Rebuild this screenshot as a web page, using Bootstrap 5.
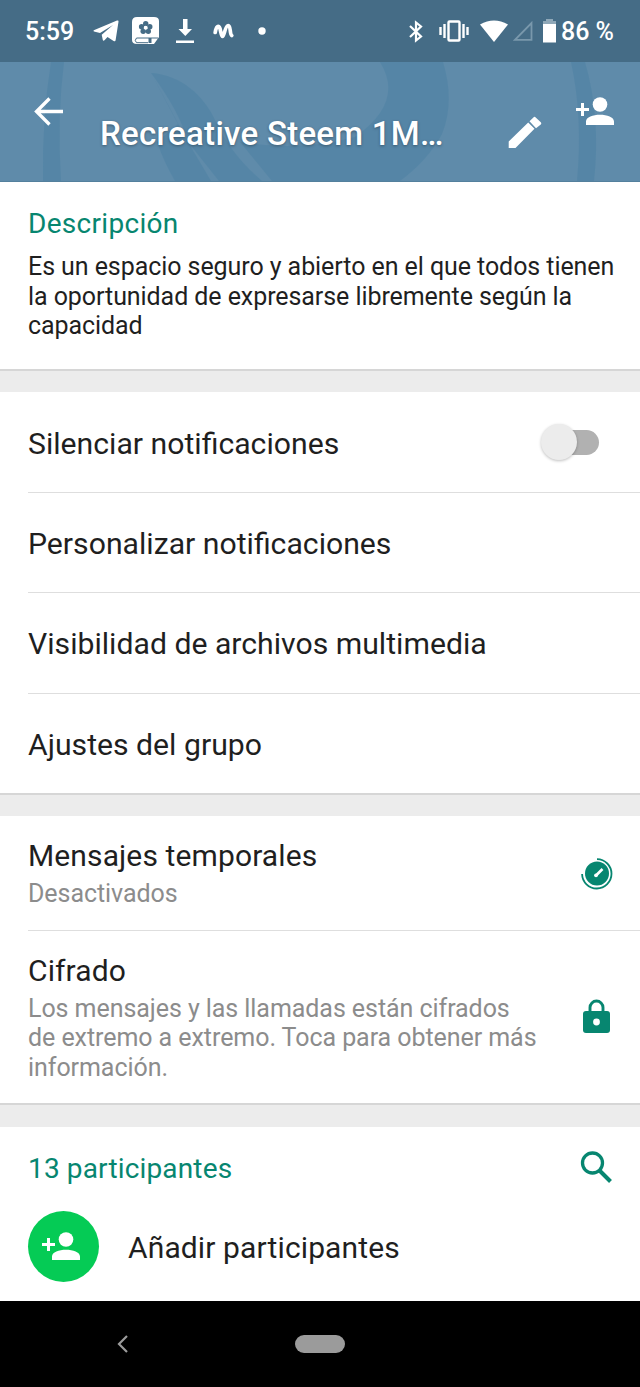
<!DOCTYPE html>
<html lang="es">
<head>
<meta charset="utf-8">
<meta name="viewport" content="width=device-width, initial-scale=1">
<title>Información del grupo</title>
<link href="https://cdn.jsdelivr.net/npm/bootstrap@5.3.0/dist/css/bootstrap.min.css" rel="stylesheet">
<style>
body{font-family:Roboto,"Liberation Sans",sans-serif;background:#ececec;color:#1f1f1f;width:640px;height:1387px;overflow:hidden}
svg{display:block;flex:none}
.statusbar{height:62px;background:#456c86;color:#fff;font-size:25px;font-weight:500;padding:0 26px 0 25px}
.statusbar span{padding-top:2px}
.hero{height:120px;background:#5f8baa;border-bottom:1px solid #54809d;color:#fff;isolation:isolate}
.hero-art{z-index:-1}
.hero h1{font-size:33px;font-weight:500;line-height:38px;text-shadow:0 1px 3px rgba(0,0,0,.35);width:408px;letter-spacing:.27px}
.panel{background:#fff;border-bottom:2px solid #d6d6d6;margin-bottom:21px}
.teal{color:#078670}
.sect{font-size:28px;line-height:34px;letter-spacing:.3px}
.desc{font-size:25px;line-height:29.4px;letter-spacing:-.07px}
.opt{height:100.5px;margin-left:28px;padding:3px 40px 0 0;font-size:30.200px;line-height:36px}
.opt:first-child{height:99.5px}
.opt+.opt,.info+.info{border-top:1px solid #dedede}
.info{margin-left:28px;padding-right:27px}
.name{font-size:30px;line-height:36px;letter-spacing:.12px}
.hint{font-size:25px;line-height:29.4px;color:#8c8c8c;letter-spacing:-.06px;padding-top:5px}
.switch-track{width:44px;height:25px;background:#b1b1b1;border-radius:13px;margin-right:1px}
.switch-thumb{width:36px;height:36px;left:-14px;top:-6px;background:#ececec;border-radius:50%;box-shadow:0 1px 3px rgba(0,0,0,.25)}
.people{height:174px;margin-top:22px}
.add-btn{width:71px;height:71px;background:#05cb55}
.navkeys{height:86px;background:#000}
.home-key{width:50px;height:18px;background:#9b9b9b}
</style>
</head>
<body>
<div class="statusbar d-flex align-items-center">
  <span>5:59</span>
  <svg style="margin-left:19px" width="27" height="22" viewBox="0 0 27 22" fill="#fff"><path d="M.8 10.300 24 .6Q25.800 0 25.500 1.800L22.600 20.300Q22.200 22 20.600 21L14.500 17 11.500 20.300Q10 21.500 9.700 19.500L8.700 14.800 20 5 7 13 1 11.500Q0 11 .8 10.300Z"/></svg>
  <svg style="margin-left:12px" width="28" height="28" viewBox="0 0 28 28"><path fill="#fff" d="M5 0H22Q27 0 27 4V20L22 27H5Q0 27 0 23V5Q0 0 5 0Z"/><g fill="#456c86"><circle cx="13.700" cy="6.800" r="2.700"/><circle cx="17.800" cy="9.800" r="2.700"/><circle cx="16.300" cy="14.300" r="2.700"/><circle cx="11.200" cy="14.300" r="2.700"/><circle cx="9.600" cy="9.800" r="2.700"/></g><circle cx="13.700" cy="10.700" r="1.900" fill="#fff"/><path d="M26 21H4.500q-2.500 2.500 0 4.700H16" fill="none" stroke="#456c86" stroke-width="1"/><path fill="#456c86" d="M16.500 21h3v5h-3Z"/></svg>
  <svg style="margin-left:16px" width="19" height="26" viewBox="0 0 19 26" fill="#fff"><path d="M7 1h4.500v10h4.500L9.300 18 2.500 11H7ZM0 22.500h18V25H0Z"/></svg>
  <svg style="margin-left:18px" width="21" height="17" viewBox="0 0 21 17"><path d="M2.200 9.500C3 3.500 5.800 1.500 7 5.500C8 9.500 8.300 13.500 9.500 13.500C11.300 13.500 12 2.500 15.300 2.500C18 2.500 16.500 11 18.700 12.500" fill="none" stroke="#fff" stroke-width="3.700" stroke-linecap="round"/></svg>
  <svg style="margin-left:24px" width="8" height="8" viewBox="0 0 8 8"><circle cx="4" cy="4" r="3.700" fill="#fff"/></svg>
  <svg class="ms-auto" width="16" height="23" viewBox="0 0 16 23" fill="none" stroke="#fff" stroke-width="2.200"><path d="m2 6 11 10.500-5 4V2.500l5 4L2 17"/></svg>
  <svg style="margin-left:15px" width="30" height="22" viewBox="0 0 30 22" fill="none" stroke="#fff" stroke-width="2.400"><rect x="9.500" y="1.500" width="11" height="19" rx="1"/><path d="M5.500 4v14M1.500 7v8M24.500 4v14M28.500 7v8"/></svg>
  <svg style="margin-left:11px" width="28" height="22" viewBox="0 0 28 22" fill="#fff"><path d="M0 4.500Q14-3.500 28 4.500L14 22Z"/></svg>
  <svg style="margin-left:5px" width="20" height="20" viewBox="0 0 20 20"><path d="M2 18.800H18.500V2Z" fill="none" stroke="#7998ac" stroke-width="1.800"/></svg>
  <svg style="margin-left:10px" width="13" height="24" viewBox="0 0 13 24"><path d="M3 0h7v2h3v3H0V2h3Z" fill="#8fa8b8"/><path d="M0 5h13v18.500H0Z" fill="#fff"/></svg>
  <span style="margin-left:5px">86 %</span>
</div>

<header class="hero d-flex align-items-start position-relative">
  <svg class="hero-art position-absolute top-0 start-0" width="640" height="119" viewBox="0 0 640 119" fill="#5083a5"><path opacity=".65" d="M51 0H64Q57 55 61 119H43Q42 55 51 0Z"/><path d="M151 11C180 13 202 33 214 58L225 80Q243 105 268 119H218L186 76Q200 98 209 119H175L151 73L177 60Q170 40 151 11Z" opacity="0"/><path d="M151 11C182 13 204 35 214 56Q230 92 262 119H219L188 80Q180 50 151 11ZM151 11L188 80L211 119H175Q164 100 157 80L178 62Z" opacity=".65"/><path opacity=".65" d="M380 0H443Q455 40 442 72Q428 98 400 119H272L240 80Q300 90 355 75Q405 40 380 0Z"/><path opacity=".65" d="M571 0H585Q601 55 594 119H577Q583 55 571 0Z"/></svg>
  <svg style="margin:35px 0 0 34px" width="29" height="29" viewBox="0 0 29 29" fill="none" stroke="#fff" stroke-width="3.300"><path d="M29 14.500H3M15.500 1.500 2.500 14.500l13 13"/></svg>
  <h1 class="mb-0 text-nowrap" style="margin:53px 0 0 37px">Recreative Steem 1M…</h1>
  <svg style="margin-top:53px" width="34" height="34" viewBox="0 0 34 34" fill="#fff"><path d="M.7 26.500 20.200 7.500 26.500 13.800 7.500 33H.7ZM21.500 6.200 25.400 2.400Q26.500 1.300 27.700 2.400L32.800 7.300Q33.900 8.400 32.800 9.500L28 13.200Z"/></svg>
  <svg style="margin:34px 0 0 34px" width="38" height="30" viewBox="0 0 38 30" fill="#fff"><circle cx="24" cy="8.500" r="7.300"/><path d="M10 29V25.500C10 16.500 38 16.500 38 25.500V29ZM5 7h3v5h5v3H8v5H5v-5H0v-3h5Z"/></svg>
</header>

<main>
  <section class="panel" style="height:189px;padding:25px 0 0 28px">
    <div class="sect teal">Descripción</div>
    <div class="desc text-nowrap" style="padding-top:11.400px">Es un espacio seguro y abierto en el que todos tienen<br>la oportunidad de expresarse libremente según la<br>capacidad</div>
  </section>

  <section class="panel" style="height:403px">
    <div class="opt d-flex align-items-center justify-content-between"><span style="padding-top:1px">Silenciar notificaciones</span><span class="switch-track position-relative" style="margin-bottom:1px"><span class="switch-thumb position-absolute"></span></span></div>
    <div class="opt d-flex align-items-center">Personalizar notificaciones</div>
    <div class="opt d-flex align-items-center">Visibilidad de archivos multimedia</div>
    <div class="opt d-flex align-items-center">Ajustes del grupo</div>
  </section>

  <section class="panel mb-0" style="height:289px">
    <div class="info d-flex align-items-center justify-content-between" style="height:114px">
      <div><div class="name">Mensajes temporales</div><div class="hint">Desactivados</div></div>
      <svg style="margin-top:2px" width="32" height="32" viewBox="0 0 32 32"><circle cx="16" cy="15.500" r="12" fill="#078670"/><path d="M16 1.100A14.700 14.700 0 1 1 1.100 16" fill="none" stroke="#078670" stroke-width="1.800"/><path d="m15 17.500 6.500-6.500" fill="none" stroke="#fff" stroke-width="2.600"/><circle cx="15" cy="17.300" r="1.900" fill="#fff"/></svg>
    </div>
    <div class="info d-flex align-items-center justify-content-between" style="height:173px">
      <div style="padding-top:1px"><div class="name">Cifrado</div><div class="hint text-nowrap">Los mensajes y las llamadas están cifrados<br>de extremo a extremo. Toca para obtener más<br>información.</div></div>
      <svg style="margin:0 3px 2px 0" width="27" height="35" viewBox="0 0 27 35"><path d="M7 14V8.500a6.500 6.500 0 0 1 13 0V14" fill="none" stroke="#078670" stroke-width="2.900"/><rect y="12" width="27" height="22" rx="3" fill="#078670"/><circle cx="13.500" cy="23" r="3.400" fill="#fff"/></svg>
    </div>
  </section>

  <section class="people bg-white">
    <div class="d-flex align-items-center justify-content-between" style="padding:22px 28px 0 28px">
      <div class="sect teal" style="padding-top:3px;letter-spacing:.15px">13 participantes</div>
      <svg width="32" height="34" viewBox="0 0 32 34" fill="none" stroke="#078670"><circle cx="12.500" cy="12" r="10" stroke-width="3.300"/><path d="m19.500 19.500 11 11" stroke-width="4"/></svg>
    </div>
    <div class="d-flex align-items-center" style="margin:25px 0 0 28px">
      <span class="add-btn rounded-circle d-flex align-items-center"><svg style="margin-left:14px" width="38" height="29" viewBox="0 0 38 29" fill="#fff"><circle cx="24" cy="7.500" r="7.300"/><path d="M10 28V24.500C10 15.500 38 15.500 38 24.500V28ZM5 6h3v5h5v3H8v5H5v-5H0v-3h5Z"/></svg></span>
      <span class="name" style="margin-left:29px;padding-top:2px">Añadir participantes</span>
    </div>
  </section>
</main>

<nav class="navkeys d-flex align-items-center">
  <svg style="margin-left:117px" width="11" height="18" viewBox="0 0 11 18" fill="none" stroke="#9b9b9b" stroke-width="2.200"><path d="M10 1 2 9l8 8"/></svg>
  <span class="home-key rounded-pill" style="margin-left:167px"></span>
</nav>
<script src="https://cdn.jsdelivr.net/npm/bootstrap@5.3.0/dist/js/bootstrap.bundle.min.js"></script>
</body>
</html>
